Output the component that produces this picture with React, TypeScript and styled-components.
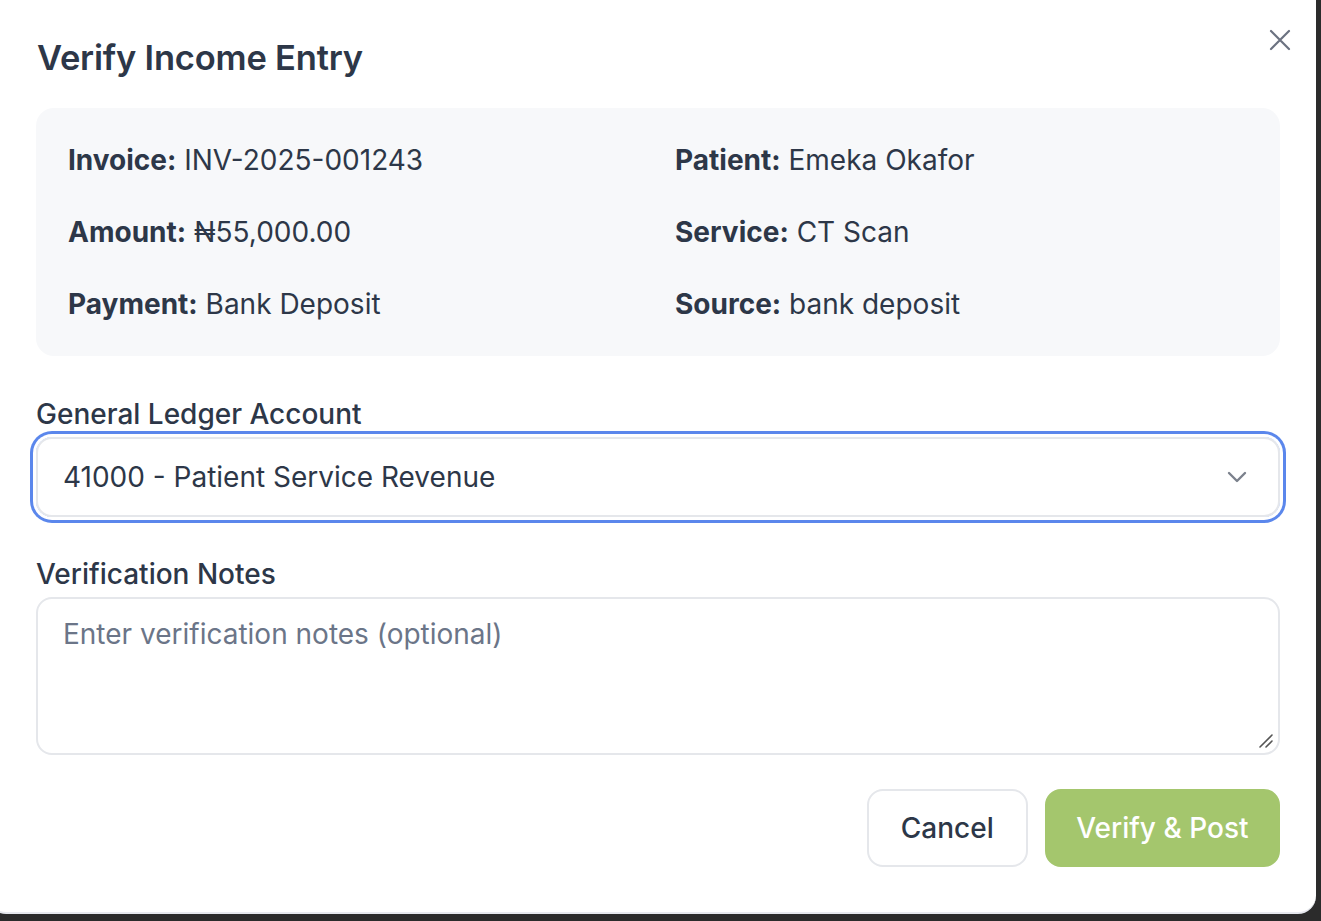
import React from "react";
import styled, { createGlobalStyle } from "styled-components";

const Global = createGlobalStyle`
  html, body { margin: 0; padding: 0; background: #2b2b2b; overflow: hidden; }
  body { font-family: Inter, "Noto Sans", sans-serif; color: #2d3748; }
  * { box-sizing: border-box; }
`;

const Backdrop = styled.div`
  width: 1321px;
  height: 921px;
  overflow: hidden;
  background: #2b2b2b;
`;

const Modal = styled.div`
  position: relative;
  margin: -20px 0 0 -12px;
  width: 1328px;
  height: 934px;
  background: #ffffff;
  border-radius: 18px;
  border-bottom: 2px solid #e6e8ee;
  padding: 20px 36px 0 48px;
  display: flex;
  flex-direction: column;
`;

const Title = styled.h2`
  margin: 36px 0 0 1px;
  font-size: 34.5px;
  line-height: 44px;
  font-weight: 600;
  color: #2d3748;
  letter-spacing: -0.2px;
`;

const CloseButton = styled.button`
  position: absolute;
  top: 46px;
  right: 22px;
  width: 28px;
  height: 28px;
  padding: 0;
  border: none;
  background: transparent;
  display: flex;
  align-items: center;
  justify-content: center;
  color: #6b7280;
`;

const InfoCard = styled.div`
  margin-top: 28px;
  background: #f7f8fa;
  border-radius: 18px;
  padding: 34px 32px;
  display: grid;
  grid-template-columns: 1fr 1fr;
  column-gap: 34px;
  row-gap: 36px;
`;

const InfoItem = styled.div`
  font-size: 28px;
  line-height: 36px;
  color: #2d3748;
  white-space: nowrap;
`;

const InfoLabel = styled.span`
  font-weight: 700;
`;

const Field = styled.div<{ $mt: number }>`
  display: flex;
  flex-direction: column;
  gap: 5px;
  margin-top: ${(p) => p.$mt}px;
`;

const Label = styled.label`
  font-size: 28px;
  line-height: 36px;
  font-weight: 500;
  color: #2d3748;
`;

const SelectBox = styled.div`
  height: 80px;
  border: 2px solid #e5e7eb;
  border-radius: 16px;
  box-shadow: 0 0 0 3px #ffffff, 0 0 0 6px #5b87ec;
  display: flex;
  align-items: center;
  justify-content: space-between;
  padding: 0 30px 0 25px;
  font-size: 28px;
  color: #2d3748;
`;

const TextArea = styled.div`
  position: relative;
  height: 158px;
  border: 2px solid #e5e7eb;
  border-radius: 16px;
  padding: 17px 25px;
  font-size: 28px;
  line-height: 36px;
  color: #6b7588;
`;

const Grip = styled.svg`
  position: absolute;
  right: 4px;
  bottom: 4px;
`;

const Actions = styled.div`
  margin-top: 34px;
  display: flex;
  justify-content: flex-end;
  gap: 17px;
`;

const Button = styled.button<{ $primary?: boolean }>`
  height: 78px;
  padding: 0 ${(p) => (p.$primary ? 29.5 : 32)}px;
  border-radius: 16px;
  font-family: Inter, "Noto Sans", sans-serif;
  font-size: 28px;
  font-weight: 500;
  border: 2px solid ${(p) => (p.$primary ? "#a4c66d" : "#e5e7eb")};
  background: ${(p) => (p.$primary ? "#a4c66d" : "#ffffff")};
  color: ${(p) => (p.$primary ? "#ffffff" : "#2d3748")};
`;

const info = [
  ["Invoice:", "INV-2025-001243"],
  ["Patient:", "Emeka Okafor"],
  ["Amount:", "₦55,000.00"],
  ["Service:", "CT Scan"],
  ["Payment:", "Bank Deposit"],
  ["Source:", "bank deposit"],
];

export default function App() {
  return (
    <Backdrop>
      <Global />
      <Modal>
        <CloseButton aria-label="Close">
          <svg width="24" height="24" viewBox="0 0 24 24" fill="none" stroke="currentColor" strokeWidth="2.2" strokeLinecap="round">
            <path d="M3 3L21 21M21 3L3 21" />
          </svg>
        </CloseButton>
        <Title>Verify Income Entry</Title>
        <InfoCard>
          {info.map(([k, v]) => (
            <InfoItem key={k}>
              <InfoLabel>{k}</InfoLabel> {v}
            </InfoItem>
          ))}
        </InfoCard>
        <Field $mt={40}>
          <Label>General Ledger Account</Label>
          <SelectBox>
            <span>41000 - Patient Service Revenue</span>
            <svg width="22" height="14" viewBox="0 0 22 14" fill="none" stroke="#7b818c" strokeWidth="2.4" strokeLinecap="round" strokeLinejoin="round">
              <path d="M3 3L11 11L19 3" />
            </svg>
          </SelectBox>
        </Field>
        <Field $mt={39}>
          <Label>Verification Notes</Label>
          <TextArea>
            Enter verification notes (optional)
            <Grip width="16" height="16" viewBox="0 0 16 16" fill="none" stroke="#555" strokeWidth="1.6" strokeLinecap="round">
              <path d="M14 2L2 14M14 8L8 14" />
            </Grip>
          </TextArea>
        </Field>
        <Actions>
          <Button>Cancel</Button>
          <Button $primary>Verify &amp; Post</Button>
        </Actions>
      </Modal>
    </Backdrop>
  );
}
